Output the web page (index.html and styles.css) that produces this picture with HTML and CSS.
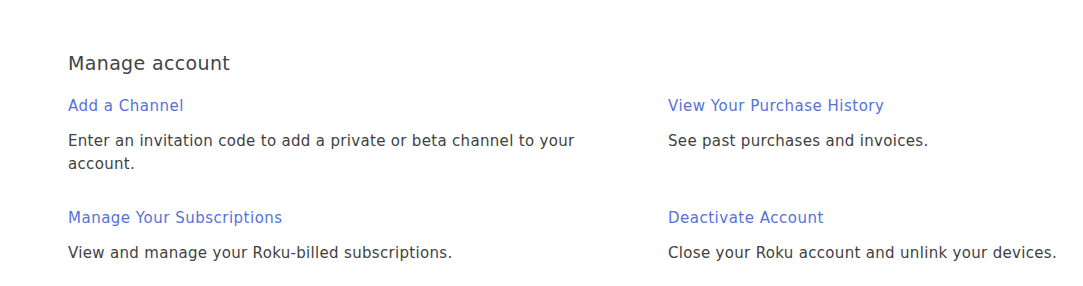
FILE: index.html
```html
<!DOCTYPE html>
<html lang="en">
<head>
<meta charset="utf-8">
<title>Manage account</title>
<link rel="stylesheet" href="styles.css">
</head>
<body>
<section class="manage">
  <h2 class="manage-title">Manage account</h2>
  <div class="manage-grid">
    <div class="item">
      <a class="item-link" href="#">Add a Channel</a>
      <p class="item-desc">Enter an invitation code to add a private or beta channel to your account.</p>
    </div>
    <div class="item">
      <a class="item-link" href="#">View Your Purchase History</a>
      <p class="item-desc">See past purchases and invoices.</p>
    </div>
    <div class="item">
      <a class="item-link" href="#">Manage Your Subscriptions</a>
      <p class="item-desc">View and manage your Roku-billed subscriptions.</p>
    </div>
    <div class="item">
      <a class="item-link" href="#">Deactivate Account</a>
      <p class="item-desc">Close your Roku account and unlink your devices.</p>
    </div>
  </div>
</section>
</body>
</html>
```
FILE: styles.css
```css
html, body {
  margin: 0;
  padding: 0;
  background: #ffffff;
}
body {
  font-family: "DejaVu Sans", "Open Sans", sans-serif;
  color: #444444;
}
.manage {
  padding: 50px 0 0 68px;
}
.manage-title {
  margin: 0;
  font-size: 19px;
  font-weight: 400;
  line-height: 26px;
  letter-spacing: 0.35px;
  color: #444444;
}
.manage-grid {
  display: grid;
  grid-template-columns: 600px 1fr;
  row-gap: 32px;
  margin-top: 20px;
}
.item {
  display: flex;
  flex-direction: column;
}
.item-link {
  font-size: 15px;
  line-height: 20px;
  letter-spacing: 0.5px;
  color: #5473d9;
  text-decoration: none;
}
.item-desc {
  margin: 14px 0 0;
  font-size: 15px;
  line-height: 23px;
  letter-spacing: 0.32px;
  color: #3f3f3f;
  max-width: 530px;
}
```
